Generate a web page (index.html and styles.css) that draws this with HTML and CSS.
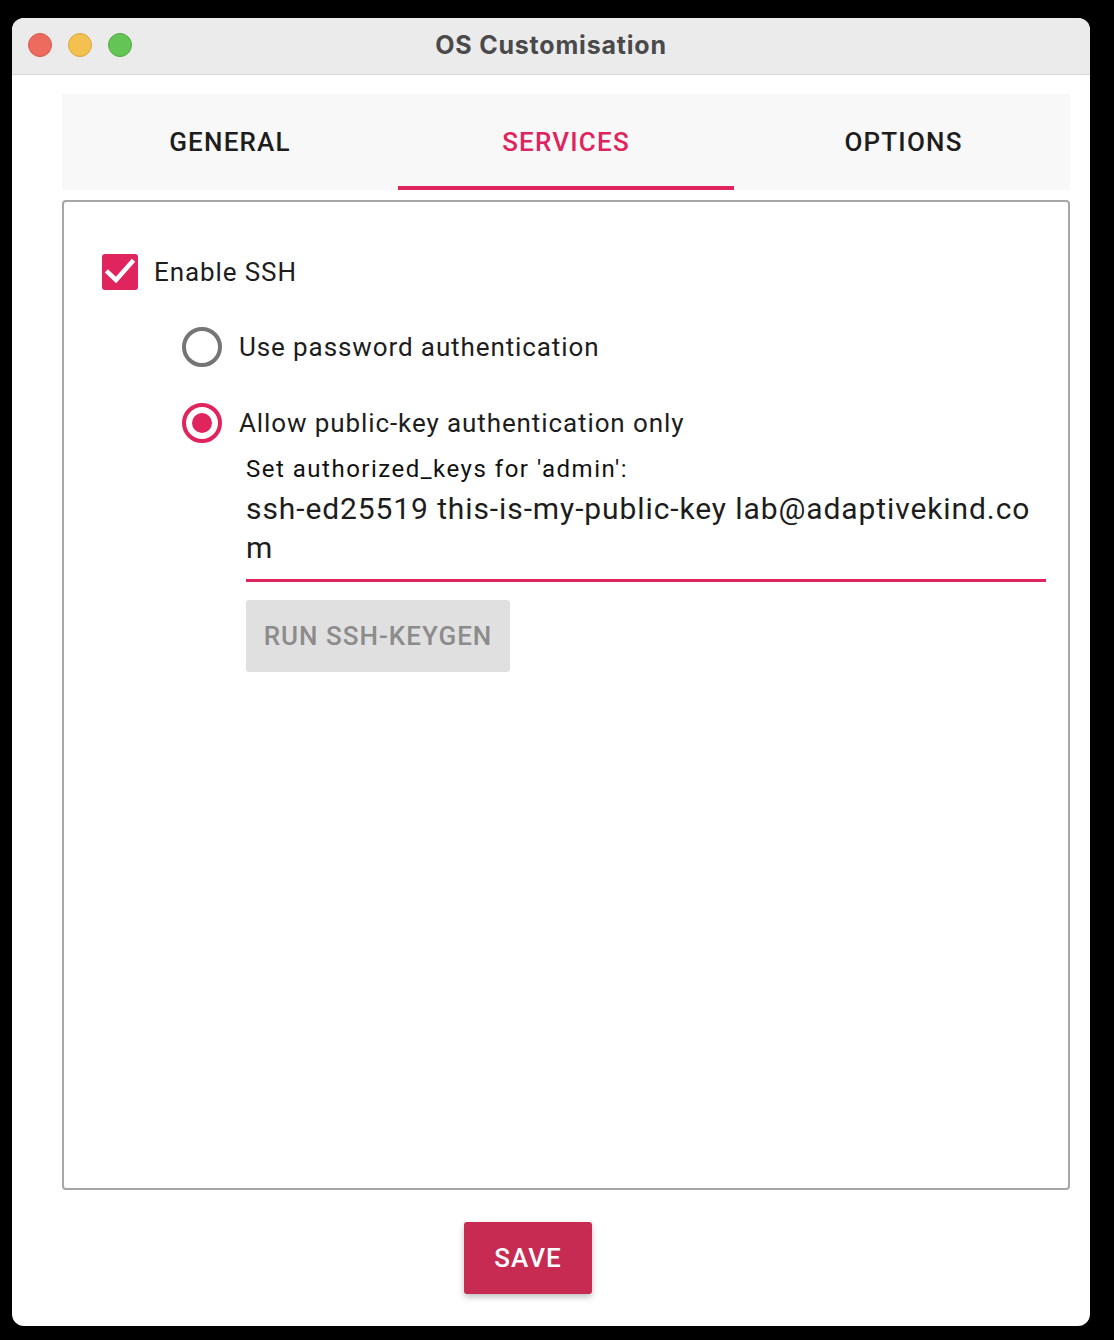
FILE: index.html
```html
<!DOCTYPE html>
<html>
<head>
<meta charset="utf-8">
<link rel="stylesheet" href="styles.css">
</head>
<body>
<div class="window">
  <div class="titlebar">
    <div class="lights">
      <span class="light red"></span>
      <span class="light yellow"></span>
      <span class="light green"></span>
    </div>
    <div class="title">OS Customisation</div>
  </div>
  <div class="body">
    <div class="tabs">
      <div class="tab">GENERAL</div>
      <div class="tab active">SERVICES</div>
      <div class="tab">OPTIONS</div>
    </div>
    <div class="panel">
      <div class="check-row">
        <span class="checkbox">
          <svg viewBox="0 0 36 36" width="36" height="36"><path d="M6 18.5 L14 26 L30 8" fill="none" stroke="#fff" stroke-width="4.5" stroke-linecap="square" stroke-linejoin="miter"/></svg>
        </span>
        <span class="label">Enable SSH</span>
      </div>
      <div class="radios">
        <div class="radio-row">
          <span class="radio"></span>
          <span class="label">Use password authentication</span>
        </div>
        <div class="radio-row">
          <span class="radio on"><span class="dot"></span></span>
          <span class="label">Allow public-key authentication only</span>
        </div>
        <div class="keys">
          <div class="keys-label">Set authorized_keys for 'admin':</div>
          <div class="keys-field">ssh-ed25519 this-is-my-public-key lab@adaptivekind.com</div>
          <button class="keygen">RUN SSH-KEYGEN</button>
        </div>
      </div>
    </div>
    <div class="actions">
      <button class="save">SAVE</button>
    </div>
  </div>
</div>
</body>
</html>
```
FILE: styles.css
```css
html, body {
  margin: 0;
  padding: 0;
  background: #000;
}
body {
  padding: 18px 24px 14px 12px;
  font-family: Roboto, "Noto Sans", sans-serif;
}
.window {
  width: 1078px;
  height: 1308px;
  background: #fff;
  border-radius: 12px;
  overflow: hidden;
  display: flex;
  flex-direction: column;
}
.titlebar {
  height: 54px;
  padding-bottom: 2px;
  background: #ebebeb;
  border-bottom: 1px solid #d8d8d8;
  display: flex;
  align-items: center;
  position: relative;
  flex-shrink: 0;
}
.lights {
  display: flex;
  gap: 16px;
  padding-left: 16px;
}
.light {
  width: 24px;
  height: 24px;
  border-radius: 50%;
  box-sizing: border-box;
  display: block;
}
.red { background: #ec6b5e; border: 1px solid #d5594c; }
.yellow { background: #f4c04f; border: 1px solid #dca83b; }
.green { background: #62c554; border: 1px solid #52a842; }
.title {
  position: absolute;
  left: 0;
  right: 0;
  top: 0;
  bottom: 2px;
  display: flex;
  align-items: center;
  justify-content: center;
  font-family: Inter, "Liberation Sans", sans-serif;
  font-weight: 700;
  font-size: 25px;
  letter-spacing: 0.8px;
  color: #4a4a4a;
}
.body {
  flex: 1;
  padding: 19px 20px 0 50px;
  display: flex;
  flex-direction: column;
}
.tabs {
  height: 96px;
  background: #f8f8f8;
  display: grid;
  grid-template-columns: 1fr 1fr 1fr;
}
.tab {
  display: flex;
  align-items: center;
  justify-content: center;
  font-weight: 500;
  font-size: 26px;
  letter-spacing: 1.2px;
  color: #1d1d1d;
  box-sizing: border-box;
}
.tab:last-child { padding-left: 3px; }
.tab.active {
  color: #e0245e;
  border-bottom: 4px solid #e0245e;
  padding-top: 4px;
}
.panel {
  margin-top: 10px;
  height: 990px;
  box-sizing: border-box;
  border: 2px solid #a6a6a6;
  border-radius: 4px;
  padding: 52px 22px 0 38px;
}
.check-row {
  display: flex;
  align-items: center;
  height: 36px;
  gap: 16px;
}
.checkbox {
  width: 36px;
  height: 36px;
  background: #e0245e;
  border-radius: 3px;
  display: block;
}
.checkbox svg { display: block; }
.label {
  font-size: 26px;
  letter-spacing: 0.9px;
  color: #1d1d1d;
}
.radios {
  padding-left: 80px;
  padding-top: 36px;
}
.radio-row {
  display: flex;
  align-items: center;
  height: 42px;
  gap: 17px;
  margin-bottom: 34px;
}
.radio-row:nth-child(2) { margin-bottom: 0; }
.radio {
  width: 40px;
  height: 40px;
  box-sizing: border-box;
  border: 4px solid #757575;
  border-radius: 50%;
  display: flex;
  align-items: center;
  justify-content: center;
}
.radio.on { border-color: #e0245e; }
.dot {
  width: 20px;
  height: 20px;
  border-radius: 50%;
  background: #e0245e;
}
.keys {
  padding-left: 64px;
}
.keys-label {
  font-size: 24px;
  letter-spacing: 1.5px;
  color: #111;
  margin-top: 10px;
  line-height: 30px;
}
.keys-field {
  font-size: 30px;
  letter-spacing: 0.9px;
  line-height: 39px;
  color: #1d1d1d;
  word-break: break-all;
  padding-top: 5px;
  padding-bottom: 12px;
  border-bottom: 3px solid #e0245e;
}
.keygen {
  display: block;
  margin-top: 18px;
  width: 264px;
  height: 72px;
  border: none;
  border-radius: 3px;
  background: #e0e0e0;
  color: #8c8c8c;
  font-family: Roboto, sans-serif;
  font-weight: 500;
  font-size: 26px;
  letter-spacing: 1px;
  padding: 0;
}
.actions {
  display: flex;
  justify-content: center;
  padding-top: 32px;
  padding-right: 76px;
}
.save {
  width: 128px;
  height: 72px;
  border: none;
  border-radius: 3px;
  background: #c72b52;
  color: #fff;
  font-family: Roboto, sans-serif;
  font-weight: 500;
  font-size: 26px;
  letter-spacing: 1px;
  box-shadow: 0 3px 6px rgba(0,0,0,0.25);
  padding: 0;
}
```
